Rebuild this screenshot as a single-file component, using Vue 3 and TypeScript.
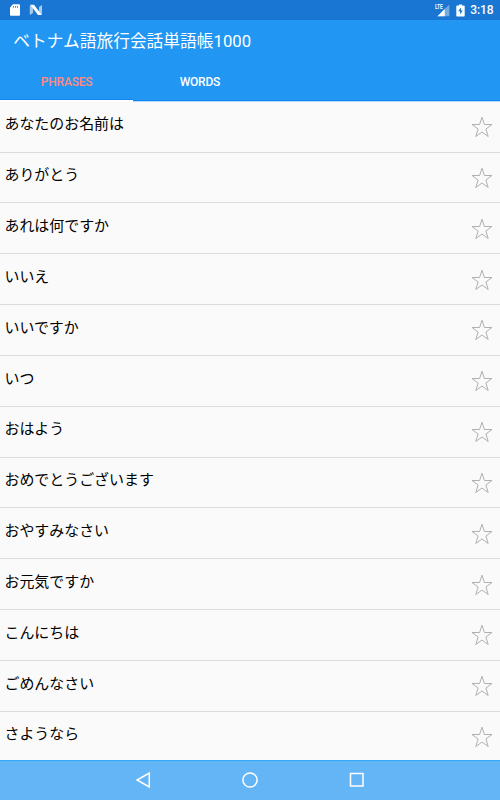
<script setup lang="ts">
import { ref } from 'vue'

const title = 'ベトナム語旅行会話単語帳1000'
const tabs: string[] = ['PHRASES', 'WORDS']
const activeTab = ref<number>(0)
const phrases: string[] = [
  'あなたのお名前は',
  'ありがとう',
  'あれは何ですか',
  'いいえ',
  'いいですか',
  'いつ',
  'おはよう',
  'おめでとうございます',
  'おやすみなさい',
  'お元気ですか',
  'こんにちは',
  'ごめんなさい',
  'さようなら',
]
</script>

<template>
  <div class="screen">
    <div class="status">
      <svg class="sd" width="12" height="14" viewBox="0 0 12 14">
        <path d="M4 1.300h6a1 1 0 0 1 1 1v9.500a1 1 0 0 1-1 1H2a1 1 0 0 1-1-1V4.500z" fill="#fff" />
        <path d="M4.500 3v1.800M6.500 3v1.800M8.500 3v1.800" stroke="#1976d2" stroke-width="0.800" />
      </svg>
      <svg class="nougat" width="14" height="12" viewBox="0 0 14 12">
        <path d="M.8 1.500L4 1v8l-3.200 2zM13 1v9.500l-3 .5V3z" fill="#a9cbee" />
        <path d="M1.200 .8h3.800L12.700 11H9z" fill="#fff" />
      </svg>
      <span class="fill"></span>
      <span class="lte">LTE</span>
      <svg class="signal" width="13" height="13" viewBox="0 0 13 13">
        <path d="M12.300 .5V12.300H.5z" fill="#75acdf" />
        <path d="M7.700 5.100v7.200H.5z" fill="#fff" />
      </svg>
      <svg class="battery" width="9" height="13" viewBox="0 0 9 13">
        <path d="M3 .5h3v1h2q.7 0 .7.700v9.600q0 .7-.7.700H1q-.7 0-.7-.7V2.200q0-.7.700-.7h2z" fill="#fff" />
        <path d="M5 3.500L2.200 7.300h1.900v3.200l2.700-4H5z" fill="#1976d2" />
      </svg>
      <span class="clock">3:18</span>
    </div>
    <header class="appbar">
      <h1>{{ title }}</h1>
      <nav class="tabs">
        <button
          v-for="(tab, i) in tabs"
          :key="tab"
          class="tab"
          :class="{ active: i === activeTab }"
          @click="activeTab = i"
        >{{ tab }}</button>
      </nav>
    </header>
    <ul class="list">
      <li v-for="phrase in phrases" :key="phrase" class="row">
        <span class="phrase">{{ phrase }}</span>
        <svg class="star" width="22" height="22" viewBox="0 0 22 22">
          <path
            d="M11 1.200L13.400 8.500H21L14.900 13L17.200 20.500L11 16L4.800 20.500L7.100 13L1 8.500H8.600Z"
            fill="none" stroke="#b0b0b0" stroke-width="1"
          />
        </svg>
      </li>
    </ul>
    <footer class="navbar">
      <svg width="20" height="20" viewBox="0 0 20 20">
        <path d="M16.300 3v14L4 10z" />
      </svg>
      <svg width="20" height="20" viewBox="0 0 20 20">
        <circle cx="10" cy="10" r="7.100" />
      </svg>
      <svg width="20" height="20" viewBox="0 0 20 20">
        <rect x="3.500" y="3.500" width="12.500" height="12.500" />
      </svg>
    </footer>
  </div>
</template>

<style>
body {
  margin: 0;
}
</style>

<style scoped>
.screen {
  width: 500px;
  height: 800px;
  display: flex;
  flex-direction: column;
  overflow: hidden;
  background: #fafafa;
  font-family: Roboto, "Noto Sans CJK JP", sans-serif;
}
.status {
  height: 20px;
  flex: none;
  box-sizing: border-box;
  padding: 0 6.500px 0 9px;
  display: flex;
  align-items: center;
  background: #1976d2;
  color: #fff;
}
.nougat {
  margin-left: 8px;
}
.fill {
  flex: 1;
}
.lte {
  width: 9px;
  font-size: 8px;
  line-height: 8px;
  font-weight: 700;
  transform: scaleX(0.6);
  transform-origin: left center;
  align-self: flex-start;
  margin: 3px -7px 0 0;
  z-index: 1;
}
.battery {
  margin-left: 6.500px;
}
.clock {
  margin-left: 5px;
  font-size: 12px;
  line-height: 20px;
  font-weight: 500;
  letter-spacing: -0.1px;
}
.appbar {
  height: 81px;
  flex: none;
  box-sizing: border-box;
  border-bottom: 1px solid #1187ee;
  background: #2196f3;
  color: #fff;
  box-shadow: 0 1px #b5d9f8;
  position: relative;
}
h1 {
  margin: 0;
  padding: 1px 0 0 13.300px;
  height: 42px;
  font-size: 16.700px;
  line-height: 42px;
  font-weight: 400;
  letter-spacing: 0.04px;
}
.tabs {
  display: flex;
  height: 37px;
}
.tab {
  width: 133.300px;
  height: 37px;
  box-sizing: border-box;
  padding: 0;
  border: 0;
  background: transparent;
  color: #fff;
  font: 500 12px/34px Roboto, sans-serif;
  letter-spacing: -0.2px;
}
.tab.active {
  color: #ff8a80;
  box-shadow: inset 0 -1px #1187ee, 0 2px #fff;
}
.list {
  flex: 1;
  min-height: 0;
  overflow: hidden;
  margin: 0;
  padding: 0.8px 0 0;
  list-style: none;
}
.row {
  height: 50.830px;
  box-sizing: border-box;
  padding: 0 7px 0 4.500px;
  display: flex;
  justify-content: space-between;
  align-items: flex-start;
  border-bottom: 1px solid #dcdcdc;
}
.row:last-child {
  border-bottom: 0;
}
.phrase {
  font-size: 14.950px;
  line-height: 22px;
  padding-top: 11.600px;
  color: #000;
}
.star {
  margin-top: 14.300px;
}
.navbar {
  height: 40px;
  flex: none;
  box-sizing: border-box;
  border-top: 1px solid #31a9f9;
  padding: 0 133px 1px;
  display: flex;
  align-items: center;
  justify-content: space-between;
  background: #64b5f6;
}
.navbar svg {
  fill: none;
  stroke: #fff;
  stroke-width: 1.500;
}
</style>
